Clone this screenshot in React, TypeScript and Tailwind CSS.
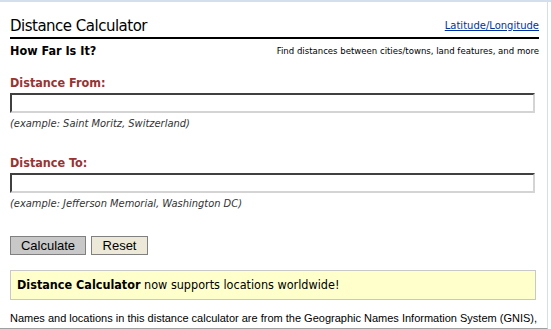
import React from 'react';

export default function App() {
  return (
    <div className="w-[551px] h-[329px] overflow-hidden bg-white border-t-2 border-[#d3dfec]">
      <div className="w-[548px] h-[327px] border-r border-[#d3dfec] border-b border-b-[#a0a0a0]">
        <div className="pl-[10px] pr-[8px]">
          {/* header */}
          <div className="flex items-end justify-between border-b-2 border-black pt-[14px] pb-[1px]">
            <h1 className="text-[15px] leading-[20px] tracking-[-0.5px] text-black font-['DejaVu_Sans',sans-serif]">
              Distance Calculator
            </h1>
            <a href="#" className="text-[10px] leading-[13px] mb-[4px] text-[#0033a0] underline font-['DejaVu_Sans',sans-serif]">
              Latitude/Longitude
            </a>
          </div>
          <div className="flex items-center justify-between pt-[4px]">
            <h2 className="text-[12.5px] leading-[15px] font-bold text-black font-['DejaVu_Sans_Condensed','DejaVu_Sans',sans-serif]">
              How Far Is It?
            </h2>
            <span className="text-[9.5px] leading-[13px] text-black font-['DejaVu_Sans_Condensed','DejaVu_Sans',sans-serif]">
              Find distances between cities/towns, land features, and more
            </span>
          </div>

          {/* from */}
          <div className="pt-[17px]">
            <label className="block text-[12.5px] leading-[16px] font-bold text-[#993333] font-['DejaVu_Sans_Condensed','DejaVu_Sans',sans-serif]">
              Distance From:
            </label>
            <input
              type="text"
              className="block mt-[2px] w-[525px] h-[20px] bg-white border-2 border-t-[#404040] border-l-[#404040] border-r-[#d4d4d4] border-b-[#d4d4d4] outline-none"
            />
            <p className="mt-[4px] text-[11px] leading-[14px] italic text-[#333] font-['DejaVu_Sans_Condensed','DejaVu_Sans',sans-serif]">
              (example: Saint Moritz, Switzerland)
            </p>
          </div>

          {/* to */}
          <div className="pt-[24px]">
            <label className="block text-[12.5px] leading-[16px] font-bold text-[#993333] font-['DejaVu_Sans_Condensed','DejaVu_Sans',sans-serif]">
              Distance To:
            </label>
            <input
              type="text"
              className="block mt-[2px] w-[525px] h-[20px] bg-white border-2 border-t-[#404040] border-l-[#404040] border-r-[#d4d4d4] border-b-[#d4d4d4] outline-none"
            />
            <p className="mt-[4px] text-[11px] leading-[14px] italic text-[#333] font-['DejaVu_Sans_Condensed','DejaVu_Sans',sans-serif]">
              (example: Jefferson Memorial, Washington DC)
            </p>
          </div>

          {/* buttons */}
          <div className="flex gap-[5px] pt-[25px]">
            <button className="w-[76px] h-[19px] bg-[#c8c8c8] border border-[#808080] text-[13px] leading-[16px] text-black font-['Liberation_Sans',sans-serif]">
              Calculate
            </button>
            <button className="w-[57px] h-[19px] bg-[#ece9d8] border border-[#808080] text-[13px] leading-[16px] text-black font-['Liberation_Sans',sans-serif]">
              Reset
            </button>
          </div>

          {/* notice */}
          <div className="mt-[15px] mr-[3px] h-[30px] flex items-center px-[6px] bg-[#ffffcc] border border-[#c8c8c8] text-[12.5px] text-black font-['DejaVu_Sans_Condensed','DejaVu_Sans',sans-serif]">
            <span className="font-bold">Distance Calculator</span>
            <span>&nbsp;now supports locations worldwide!</span>
          </div>

          <p className="mt-[11px] text-[11px] leading-[15px] text-black whitespace-nowrap font-['Liberation_Sans',sans-serif]">
            Names and locations in this distance calculator are from the Geographic Names Information System (GNIS),
          </p>
        </div>
      </div>
    </div>
  );
}
